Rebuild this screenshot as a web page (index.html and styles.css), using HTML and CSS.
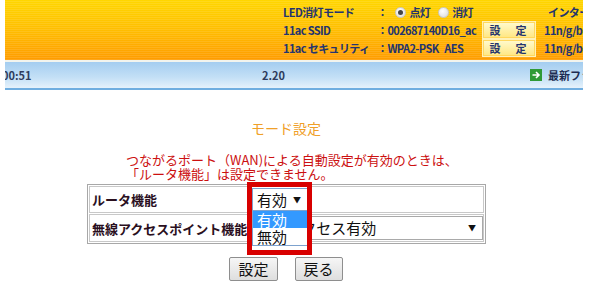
FILE: index.html
```html
<!DOCTYPE html>
<html lang="ja">
<head>
    <meta charset="UTF-8">
    <title>モード設定</title>
    <link rel="stylesheet" href="styles.css">
</head>
<body>
    <div class="page">
        <!-- ステータスヘッダー -->
        <div class="top-header">
            <div class="status-grid">
                <div class="st-label">LED消灯モード</div>
                <div class="st-value span2">
                    ：<span class="radio on"></span>点灯<span class="radio"></span>消灯
                </div>
                <div class="st-extra shift">インター</div>

                <div class="st-label">11ac SSID</div>
                <div class="st-value">：002687140D16_ac</div>
                <div class="st-btn"><span class="hd-btn">設　定</span></div>
                <div class="st-extra">11n/g/b</div>

                <div class="st-label">11ac セキュリティ</div>
                <div class="st-value">：WPA2-PSK&nbsp;&nbsp; AES</div>
                <div class="st-btn"><span class="hd-btn">設　定</span></div>
                <div class="st-extra">11n/g/b</div>
            </div>
        </div>

        <div class="info-bar">
            <span class="time">00:51</span>
            <span class="version">2.20</span>
            <span class="firm-link">
                <svg width="12" height="12" viewBox="0 0 12 12"><rect width="12" height="12" fill="#2f9a36"/><path d="M2.5 6h6M6 3l3 3-3 3" stroke="#fff" stroke-width="1.6" fill="none"/></svg>
                最新ファーム
            </span>
        </div>

        <!-- モード設定 -->
        <div class="main">
            <h1 class="title">モード設定</h1>
            <p class="notice">つながるポート（WAN)による自動設定が有効のときは、<br>「ルータ機能」は設定できません。</p>

            <table class="mode-table">
                <tr>
                    <th>ルータ機能</th>
                    <td>
                        <div class="sel-wrap">
                            <div class="fake-select small">有効<span class="arrow">▼</span></div>
                            <div class="dropdown">
                                <div class="opt active">有効</div>
                                <div class="opt">無効</div>
                            </div>
                            <div class="mark-box"></div>
                        </div>
                    </td>
                </tr>
                <tr>
                    <th>無線アクセスポイント機能</th>
                    <td>
                        <div class="fake-select wide">無線アクセス有効<span class="arrow">▼</span></div>
                    </td>
                </tr>
            </table>

            <div class="actions">
                <button class="btn">設定</button>
                <button class="btn">戻る</button>
            </div>
        </div>
    </div>
</body>
</html>
```

FILE: styles.css
```css
/* 基本 */
body {
    margin: 0;
    background: #fff;
    font-family: "Noto Sans CJK JP", "Noto Sans", sans-serif;
}

.page {
    width: 578px;
    margin-left: 5px;
    overflow: hidden;
}

/* ヘッダー */
.top-header {
    height: 60px;
    background:
        repeating-linear-gradient(0deg, rgba(255,255,255,0.10) 0 1px, transparent 1px 2px),
        linear-gradient(#ffd600, #ffc000 45%, #ff9c00);
    padding-left: 278px;
    box-sizing: border-box;
    padding-top: 3px;
    overflow: hidden;
}

.status-grid {
    display: grid;
    grid-template-columns: 94px 105px 62px 60px;
    grid-auto-rows: 18px;
    color: #24346e;
    font-size: 11px;
    font-weight: bold;
    letter-spacing: -0.6px;
    white-space: nowrap;
}

.status-grid > div {
    display: flex;
    align-items: center;
}

.span2 {
    grid-column: span 2;
}

.st-extra.shift {
    padding-left: 4px;
}

.radio {
    display: inline-block;
    width: 9px;
    height: 9px;
    border-radius: 50%;
    background: radial-gradient(circle at 40% 35%, #ffffff, #d8d8d8);
    border: 1px solid #c8c8c8;
    margin: 0 3px 0 8px;
    position: relative;
}

.radio.on::after {
    content: "";
    position: absolute;
    left: 2px;
    top: 2px;
    width: 5px;
    height: 5px;
    border-radius: 50%;
    background: #444;
}

.hd-btn {
    display: block;
    width: 52px;
    height: 16px;
    line-height: 16px;
    text-align: center;
    background: linear-gradient(#fffbd0, #ffe680);
    border: 1px solid #fff2b8;
    box-shadow: inset 0 0 0 1px #ffd860;
    color: #24346e;
    font-size: 11px;
    letter-spacing: 2px;
}

/* 情報バー */
.info-bar {
    height: 26px;
    border-top: 2px solid #f2f4ee;
    border-bottom: 2px solid #70aee0;
    background: linear-gradient(#a4cdf0, #c4e0f6 60%, #e6f2fb);
    display: flex;
    align-items: center;
    color: #2e3c5c;
    font-size: 11px;
    font-weight: bold;
    white-space: nowrap;
    overflow: hidden;
}

.info-bar > span {
    flex: none;
}

.time {
    margin-left: -3px;
    width: 260px;
}

.version {
    width: 268px;
}

.firm-link {
    display: flex;
    align-items: center;
    gap: 6px;
    color: #1f2d52;
}

/* メイン */
.main {
    width: 562px;
    text-align: center;
}

.title {
    margin: 29px 0 0;
    font-size: 14px;
    font-weight: normal;
    line-height: 18px;
    color: #f0a028;
}

.notice {
    margin: 16px 0 0 121px;
    text-align: left;
    font-size: 13px;
    line-height: 14px;
    color: #cc1010;
}

.mode-table {
    margin: 3px 0 0 82px;
    width: 399px;
    border: 1px solid #a8a8a8;
    border-spacing: 1px;
    text-align: left;
}

.mode-table th,
.mode-table td {
    border: 1px solid #c8c8c8;
    padding: 1px 0;
    height: 23px;
}

.mode-table th {
    width: 158px;
    padding-left: 2px;
    font-size: 13px;
    color: #2a0f1e;
    white-space: nowrap;
}

.mode-table td {
    padding-left: 1px;
}

.sel-wrap {
    position: relative;
    width: 56px;
}

.fake-select {
    box-sizing: border-box;
    height: 23px;
    line-height: 21px;
    border: 1px solid #a9a9a9;
    background: #fff;
    font-size: 15px;
    color: #111;
    padding-left: 4px;
    position: relative;
    white-space: nowrap;
}

.fake-select.small {
    width: 56px;
    border-color: #7da2ce;
}

.fake-select.wide {
    width: 231px;
    height: 24px;
}

.arrow {
    position: absolute;
    right: 6px;
    top: 0;
    font-size: 8px;
}

/* 開いたリスト */
.dropdown {
    position: absolute;
    left: 0;
    top: 22px;
    width: 56px;
    box-sizing: border-box;
    border: 1px solid #7da2ce;
    background: #fff;
    z-index: 2;
}

.opt {
    height: 17px;
    line-height: 17px;
    font-size: 15px;
    padding-left: 4px;
    color: #111;
}

.opt.active {
    background: #3399ff;
    color: #fff;
}

.mark-box {
    position: absolute;
    left: -5px;
    top: -6px;
    width: 55px;
    height: 63px;
    border: 5px solid #d80000;
    z-index: 3;
    pointer-events: none;
}

/* ボタン */
.actions {
    margin-top: 13px;
    display: flex;
    justify-content: center;
    gap: 17px;
}

.btn {
    height: 24px;
    padding: 0 8px;
    font-family: inherit;
    font-size: 15px;
    line-height: 20px;
    color: #111;
    background: linear-gradient(#f6f6f6, #dedede);
    border: 1px solid #8e8e8e;
    border-radius: 2px;
}
```
